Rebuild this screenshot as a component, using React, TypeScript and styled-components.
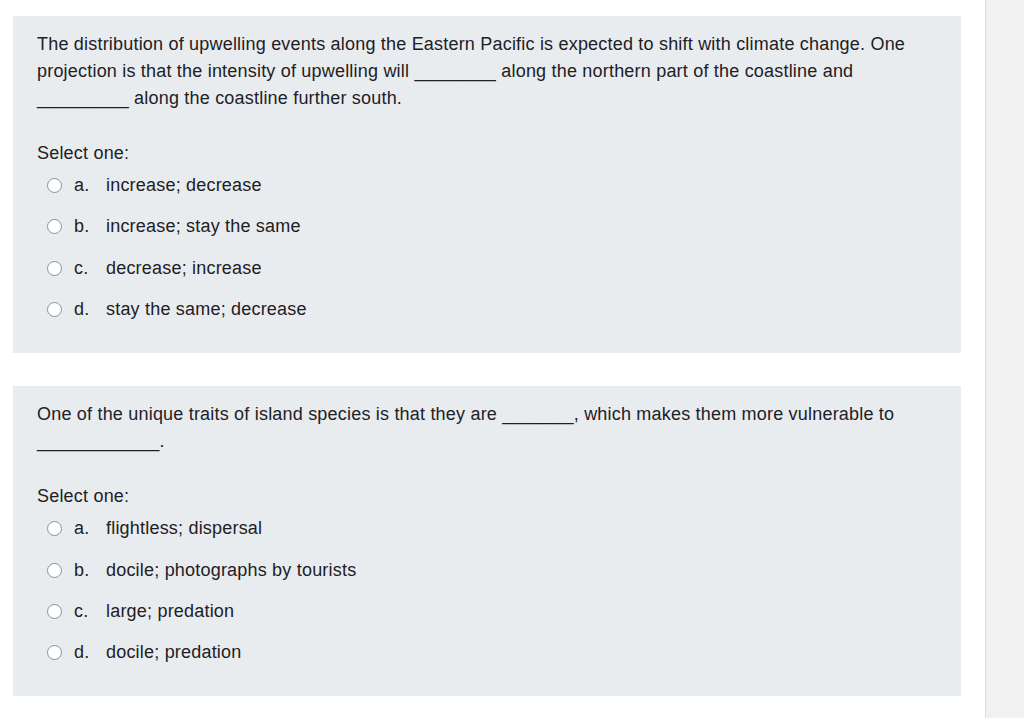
import styled, { createGlobalStyle } from 'styled-components'

const GlobalStyle = createGlobalStyle`
  html, body {
    margin: 0;
    padding: 0;
    background: #ffffff;
  }
  body {
    font-family: 'Liberation Sans', Arial, Helvetica, sans-serif;
    color: #1d2125;
  }
`

type Question = {
  lines: string[]
  options: string[]
}

const questions: Question[] = [
  {
    lines: [
      'The distribution of upwelling events along the Eastern Pacific is expected to shift with climate change. One',
      'projection is that the intensity of upwelling will ________ along the northern part of the coastline and',
      '_________ along the coastline further south.',
    ],
    options: ['increase; decrease', 'increase; stay the same', 'decrease; increase', 'stay the same; decrease'],
  },
  {
    lines: [
      'One of the unique traits of island species is that they are _______, which makes them more vulnerable to',
      '____________.',
    ],
    options: ['flightless; dispersal', 'docile; photographs by tourists', 'large; predation', 'docile; predation'],
  },
]

const letters = ['a.', 'b.', 'c.', 'd.']

export default function App() {
  return (
    <Page>
      <GlobalStyle />
      <Main>
        {questions.map((q, i) => (
          <Card key={i}>
            <QuestionText>
              {q.lines.map((line, j) => (
                <Line key={j}>{line}</Line>
              ))}
            </QuestionText>
            <Prompt>Select one:</Prompt>
            <Answers>
              {q.options.map((opt, j) => (
                <Option key={j}>
                  <Radio type="radio" name={`q${i}`} />
                  <Letter>{letters[j]}</Letter>
                  <span>{opt}</span>
                </Option>
              ))}
            </Answers>
          </Card>
        ))}
      </Main>
      <Sidebar />
    </Page>
  )
}

const Page = styled.div`
  display: flex;
  min-height: 718px;
`

const Main = styled.div`
  flex: 1;
  padding: 16px 24px 0 13px;
  display: flex;
  flex-direction: column;
  gap: 33px;
`

const Sidebar = styled.div`
  width: 38px;
  flex-shrink: 0;
  background: #f1f1f1;
  border-left: 1px solid #dcdcdc;
`

const Card = styled.div`
  background: #e9ecef;
  padding: 15px 24px 23px;
  font-size: 18px;
  letter-spacing: 0.2px;
`

const QuestionText = styled.div`
  line-height: 27px;
`

const Line = styled.div`
  white-space: nowrap;
`

const Prompt = styled.div`
  margin-top: 30px;
  line-height: 23px;
`

const Answers = styled.div`
  display: flex;
  flex-direction: column;
`

const Option = styled.label`
  display: flex;
  align-items: center;
  height: 41.3px;
  padding-left: 10px;
`

const Radio = styled.input`
  appearance: none;
  margin: 0 12px 0 0;
  width: 15px;
  height: 15px;
  border-radius: 50%;
  border: 1px solid #8a9099;
  background: #ffffff;
  flex-shrink: 0;
`

const Letter = styled.span`
  width: 32px;
  flex-shrink: 0;
`
